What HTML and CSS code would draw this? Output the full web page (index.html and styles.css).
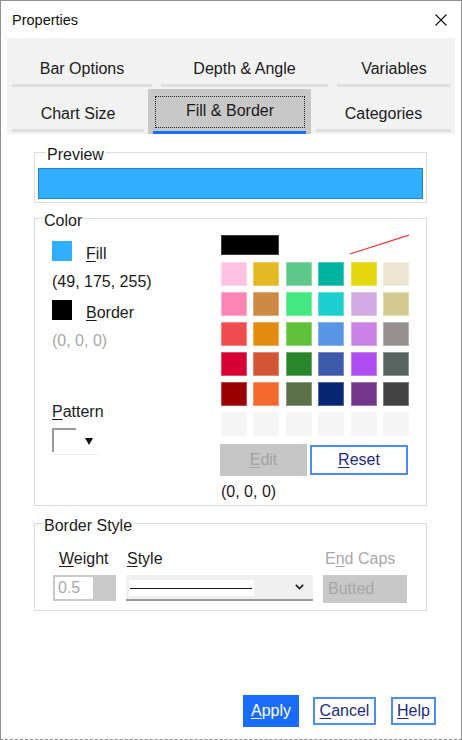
FILE: index.html
```html
<!DOCTYPE html>
<html>
<head>
<meta charset="utf-8">
<title>Properties</title>
<link rel="stylesheet" href="styles.css">
</head>
<body>
<div class="window">
  <div class="titlebar">
    <span class="title">Properties</span>
    <svg class="close" width="12" height="12" viewBox="0 0 12 12"><path d="M0.5 0.5 L11.5 11.5 M11.5 0.5 L0.5 11.5" stroke="#111" stroke-width="1.1" fill="none"/></svg>
  </div>

  <div class="tabs">
    <div class="tab-row row1">
      <div class="tab w140">Bar Options</div>
      <div class="tab w167">Depth &amp; Angle</div>
      <div class="tab w114">Variables</div>
    </div>
    <div class="tab-row row2">
      <div class="tab tab2 w132">Chart Size</div>
      <div class="tab selected">
        <div class="focus">Fill &amp; Border</div>
        <div class="active-bar"></div>
      </div>
      <div class="tab tab2 w135">Categories</div>
    </div>
  </div>

  <div class="content">
    <fieldset class="group preview">
      <legend>Preview</legend>
      <div class="preview-bar"></div>
    </fieldset>

    <fieldset class="group color">
      <legend>Color</legend>
      <div class="color-body">
        <div class="color-left">
          <div class="swrow"><span class="sw fill"></span><span class="swlabel"><u>F</u>ill</span></div>
          <div class="rgb first">(49, 175, 255)</div>
          <div class="swrow second"><span class="sw black"></span><span class="swlabel"><u>B</u>order</span></div>
          <div class="rgb muted">(0, 0, 0)</div>
          <div class="pattern-label"><u>P</u>attern</div>
          <div class="pattern">
            <span class="pbox"></span>
            <svg class="parrow" width="8" height="7" viewBox="0 0 8 7"><polygon points="0,0 8,0 4,7" fill="#111"/></svg>
          </div>
        </div>
        <div class="color-right">
          <div class="pal-top">
            <span class="pal-black"></span>
            <svg class="nocolor" width="60" height="21" viewBox="0 0 60 21"><line x1="1" y1="20" x2="60" y2="1" stroke="#ff2a2a" stroke-width="1.2"/></svg>
          </div>
          <div class="palette">
            <span style="background:#ffc2e1"></span>
            <span style="background:#e2b923"></span>
            <span style="background:#5fc98b"></span>
            <span style="background:#00b3a0"></span>
            <span style="background:#e5d60e"></span>
            <span style="background:#ece5d1"></span>

            <span style="background:#ff85b5"></span>
            <span style="background:#cd8844"></span>
            <span style="background:#42e880"></span>
            <span style="background:#1ccfcf"></span>
            <span style="background:#d3abe5"></span>
            <span style="background:#d2ca90"></span>

            <span style="background:#ef4d4d"></span>
            <span style="background:#e28b10"></span>
            <span style="background:#5fc23a"></span>
            <span style="background:#5896e3"></span>
            <span style="background:#cb81e6"></span>
            <span style="background:#969190"></span>

            <span style="background:#d70034"></span>
            <span style="background:#d35535"></span>
            <span style="background:#2a862a"></span>
            <span style="background:#3e5aab"></span>
            <span style="background:#ae4df0"></span>
            <span style="background:#596460"></span>

            <span style="background:#9a0000"></span>
            <span style="background:#f56a2c"></span>
            <span style="background:#5c7148"></span>
            <span style="background:#072673"></span>
            <span style="background:#75358b"></span>
            <span style="background:#434343"></span>

            <span class="empty"></span>
            <span class="empty"></span>
            <span class="empty"></span>
            <span class="empty"></span>
            <span class="empty"></span>
            <span class="empty"></span>
          </div>
          <div class="pal-buttons">
            <div class="btn-edit"><u>E</u>dit</div>
            <div class="btn-reset"><u>R</u>eset</div>
          </div>
          <div class="pal-rgb">(0, 0, 0)</div>
        </div>
      </div>
    </fieldset>

    <fieldset class="group border-style">
      <legend>Border Style</legend>
      <div class="bs-grid">
        <div class="bs-label l-weight"><u>W</u>eight</div>
        <div class="bs-label l-style"><u>S</u>tyle</div>
        <div class="bs-label l-caps">E<u>n</u>d Caps</div>
        <div class="weight"><div class="weight-field">0.5</div></div>
        <div class="style-select">
          <div class="line-preview"><span class="line"></span></div>
          <svg class="chev" width="9" height="6" viewBox="0 0 9 6"><polyline points="0.8,0.8 4.5,4.6 8.2,0.8" fill="none" stroke="#222" stroke-width="1.7"/></svg>
        </div>
        <div class="butted">Butted</div>
      </div>
    </fieldset>
  </div>

  <div class="footer">
    <div class="fbtn apply"><u>A</u>pply</div>
    <div class="fbtn outline cancel"><u>C</u>ancel</div>
    <div class="fbtn outline help"><u>H</u>elp</div>
  </div>
</div>
</body>
</html>
```

FILE: styles.css
```css
html, body {
  margin: 0;
  padding: 0;
  background: #ffffff;
}

body {
  font-family: "Liberation Sans", Arial, sans-serif;
  font-size: 16px;
  color: #1b1b1b;
}

u {
  text-decoration: underline;
  text-underline-offset: 2px;
}

.window {
  width: 462px;
  height: 740px;
  box-sizing: border-box;
  border: 1px solid #8f8f8f;
  border-bottom: 1px dashed #8f8f8f;
  background: #ffffff;
  display: flex;
  flex-direction: column;
}

/* title bar */
.titlebar {
  height: 37px;
  display: flex;
  align-items: center;
  justify-content: space-between;
  padding: 0 14px 0 11px;
}

.title {
  font-size: 14.5px;
  color: #111;
}

/* tabs */
.tabs {
  margin: 0 6px;
  background: #f2f2f2;
}

.tab-row {
  display: flex;
  padding-left: 5px;
  align-items: flex-start;
}

.row1 { gap: 9px; }
.row2 { margin-top: 2px; }

.tab {
  box-sizing: border-box;
  height: 49px;
  padding-top: 21px;
  line-height: 20px;
  text-align: center;
  border-bottom: 3px solid #dfdfdf;
  color: #1a1a1a;
}

.tab2 {
  height: 43px;
  padding-top: 15px;
}

.w140 { width: 140px; }
.w167 { width: 167px; }
.w114 { width: 114px; }
.w132 { width: 132px; }
.w135 { width: 135px; }

.tab.selected {
  width: 163px;
  height: 45px;
  margin: 0 5px 0 4px;
  padding: 7px 6px 0 7px;
  background: #c8c8c8;
  border: none;
}

.focus {
  box-sizing: border-box;
  height: 32px;
  border: 1px dotted #222;
  line-height: 28px;
}

.active-bar {
  width: 153px;
  height: 3px;
  margin: 3px 0 0 -2px;
  background: #1a6cff;
}

/* content */
.content {
  padding: 6px 34px 0 33px;
}

.group {
  margin: 0;
  padding: 0;
  border: 1px solid #dcdcdc;
  min-width: 0;
}

.group legend {
  margin-left: 8px;
  padding: 6px 1px 0 1px;
  line-height: 18px;
  font-size: 16px;
  color: #1b1b1b;
}

.preview { padding: 4px 3px 3px 3px; }

.preview-bar {
  box-sizing: border-box;
  height: 31px;
  background: #31afff;
  border: 1px solid #1f86c9;
}

.color { margin-top: 3px; }

.color-body {
  display: flex;
  padding: 0 0 3px 17px;
}

.color-left {
  width: 168px;
  padding-top: 11px;
}

.swrow {
  display: flex;
  gap: 14px;
  height: 20px;
  align-items: flex-start;
}

.swrow.second { margin-top: 8px; }

.sw { width: 20px; height: 20px; display: block; }
.sw.fill { background: #31afff; }
.sw.black { background: #000; }

.swlabel { line-height: 20px; margin-top: 3px; }

.rgb { line-height: 20px; margin-top: 11px; }
.rgb.muted { color: #a8a8a8; }

.pattern-label { line-height: 20px; margin-top: 51px; }

.pattern {
  margin-top: 6px;
  width: 46px;
  height: 27px;
  box-sizing: border-box;
  border-bottom: 1px solid #ececec;
  display: flex;
  align-items: flex-start;
}

.pbox {
  display: block;
  width: 24px;
  height: 24px;
  box-sizing: border-box;
  border-top: 2px solid #9a9a9a;
  border-left: 2px solid #9a9a9a;
}

.parrow { margin: 10px 0 0 9px; }

.color-right { width: 189px; padding-top: 5px; }

.pal-top { display: flex; height: 20px; align-items: flex-start; }

.pal-black {
  display: block;
  width: 58px;
  height: 20px;
  margin-left: 1px;
  background: #000;
  box-shadow: inset 0 0 0 1px #3a3a3a;
}

.nocolor { margin: -1px 0 0 auto; }

.palette {
  margin: 7px 0 0 1px;
  display: grid;
  grid-template-columns: repeat(6, 26px);
  grid-auto-rows: 24px;
  column-gap: 6.4px;
  row-gap: 6px;
}

.palette span { display: block; box-shadow: inset 0 0 0 1px rgba(255, 255, 255, 0.3); }
.palette span.empty { background: #f5f5f5; box-shadow: none; }

.pal-buttons { margin-top: 8px; display: flex; align-items: flex-start; }

.btn-edit {
  width: 87px;
  height: 32px;
  line-height: 32px;
  text-align: center;
  background: #c6c6c6;
  color: #a3a3a3;
}

.btn-reset {
  box-sizing: border-box;
  width: 98px;
  height: 30px;
  margin: 1px 0 0 3px;
  line-height: 26px;
  text-align: center;
  border: 2px solid #4b8bff;
  color: #1f2b80;
  background: #fff;
}

.pal-rgb { margin-top: 6px; line-height: 20px; padding-left: 1px; }

/* border style */
.border-style { margin-top: 5px; }

.bs-grid {
  display: grid;
  grid-template-columns: 63px 187px 84px;
  column-gap: 10px;
  row-gap: 6px;
  align-items: start;
  padding: 14px 0 7px 18px;
}

.bs-label { line-height: 20px; }
.l-weight { padding-left: 6px; }
.l-style { padding-left: 1px; }
.l-caps { padding-left: 2px; color: #a8a8a8; }

.weight { box-sizing: border-box; height: 26px; padding: 2px; background: #c9c9c9; }

.weight-field {
  width: 38px;
  height: 22px;
  box-sizing: border-box;
  padding-left: 3px;
  line-height: 22px;
  background: #fff;
  color: #a9a9a9;
}

.style-select {
  box-sizing: border-box;
  height: 26px;
  background: #f0f0f0;
  border-bottom: 2px solid #9a9a9a;
  display: flex;
  align-items: flex-start;
  justify-content: space-between;
  padding-right: 9px;
}

.line-preview {
  width: 125px;
  height: 16px;
  margin: 5px 0 0 3px;
  background: #fff;
  display: flex;
  align-items: center;
}

.line { display: block; width: 122px; height: 1px; margin-left: 1px; background: #1a1a1a; }

.chev { margin-top: 9px; }

.butted {
  box-sizing: border-box;
  height: 28px;
  line-height: 28px;
  padding-left: 5px;
  background: #c8c8c8;
  color: #a6a6a6;
}

/* footer */
.footer {
  margin-top: auto;
  display: flex;
  justify-content: flex-end;
  align-items: center;
  padding: 0 25px 12px 0;
}

.fbtn { box-sizing: border-box; text-align: center; }

.apply { width: 56px; height: 32px; line-height: 32px; background: #1a6cff; color: #ffffff; }

.outline {
  height: 28px;
  line-height: 24px;
  border: 2px solid #4f8cff;
  color: #1f2b80;
  background: #fff;
}

.cancel { width: 63px; margin-left: 14px; }
.help { width: 45px; margin-left: 15px; }
```
